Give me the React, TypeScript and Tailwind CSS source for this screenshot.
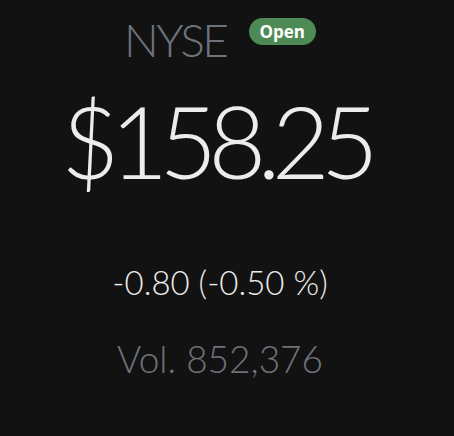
import React from "react";

const quote = {
  exchange: "NYSE",
  status: "Open",
  price: "$158.25",
  change: "-0.80 (-0.50 %)",
  volume: "Vol. 852,376",
};

export default function App() {
  return (
    <div className="min-h-[436px] w-full bg-[#121212] font-['Lato',sans-serif]">
      <div className="flex w-[440px] flex-col items-center pt-[12px]">
        {/* Exchange + market status */}
        <div className="flex items-start gap-[22px]">
          <span className="text-[46px] font-light leading-[56px] tracking-[-2.5px] text-[#6e737b]">{quote.exchange}</span>
          <span className="mt-[6px] flex h-[27px] items-center rounded-full bg-[#4d8a55] px-[11px] font-['Open_Sans',sans-serif] text-[17px] font-bold text-white">
            {quote.status}
          </span>
        </div>

        <div className="mt-[12px] pr-[9px] text-[100px] font-light leading-[120px] tracking-[-9px] text-[#ececec]">{quote.price}</div>

        <div className="mt-[60px] text-[33px] font-light leading-[44px] text-[#ececec]">{quote.change}</div>

        <div className="mt-[31px] text-[37px] font-light leading-[48px] text-[#6e737b]">{quote.volume}</div>
      </div>
    </div>
  );
}
